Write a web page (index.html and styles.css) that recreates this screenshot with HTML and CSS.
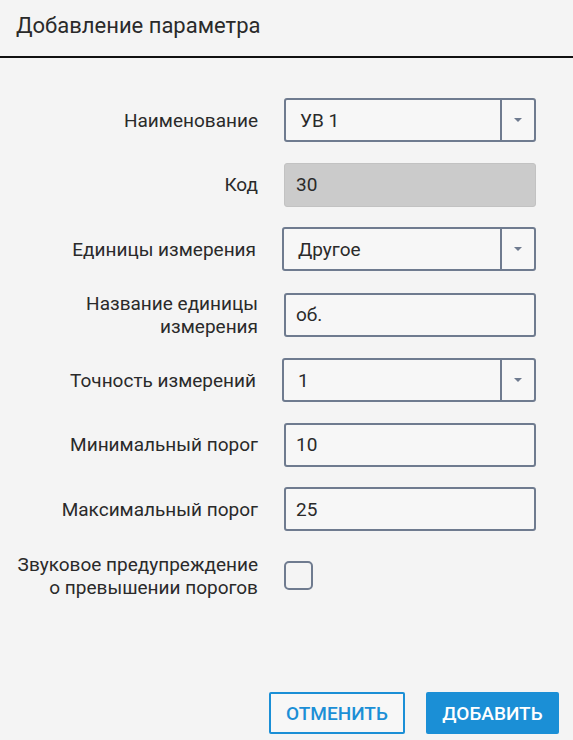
FILE: index.html
```html
<!DOCTYPE html>
<html lang="ru">
<head>
<meta charset="utf-8">
<title>Добавление параметра</title>
<link rel="stylesheet" href="styles.css">
</head>
<body>
<div class="dialog">
  <header class="dialog-header">Добавление параметра</header>
  <main class="form">
    <div class="label">Наименование</div>
    <div class="select">
      <span class="select-value">УВ 1</span>
      <span class="select-arrow"><svg width="10" height="6" viewBox="0 0 10 6"><path d="M1 1h8L5 5z" fill="#6f7b8f"/></svg></span>
    </div>

    <div class="label">Код</div>
    <div class="input input-disabled">30</div>

    <div class="label label-wide">Единицы измерения</div>
    <div class="select select-wide">
      <span class="select-value">Другое</span>
      <span class="select-arrow"><svg width="10" height="6" viewBox="0 0 10 6"><path d="M1 1h8L5 5z" fill="#6f7b8f"/></svg></span>
    </div>

    <div class="label label-multi">Название единицы<br>измерения</div>
    <div class="input">об.</div>

    <div class="label label-wide">Точность измерений</div>
    <div class="select select-wide">
      <span class="select-value">1</span>
      <span class="select-arrow"><svg width="10" height="6" viewBox="0 0 10 6"><path d="M1 1h8L5 5z" fill="#6f7b8f"/></svg></span>
    </div>

    <div class="label">Минимальный порог</div>
    <div class="input">10</div>

    <div class="label">Максимальный порог</div>
    <div class="input">25</div>

    <div class="label label-multi">Звуковое предупреждение<br>о превышении порогов</div>
    <div class="check-cell"><span class="checkbox"></span></div>
  </main>
  <footer class="actions">
    <button class="btn btn-outline">Отменить</button>
    <button class="btn btn-primary">Добавить</button>
  </footer>
</div>
</body>
</html>
```

FILE: styles.css
```css
html, body {
  margin: 0;
  padding: 0;
  background: #f4f4f4;
}
body {
  font-family: Roboto, "Liberation Sans", Arial, sans-serif;
  color: #2a2a2a;
  width: 573px;
  height: 740px;
  overflow: hidden;
}
.dialog {
  display: flex;
  flex-direction: column;
  height: 740px;
}
.dialog-header {
  height: 58px;
  box-sizing: border-box;
  padding: 11px 16px 0;
  font-size: 22px;
  line-height: 30px;
  border-bottom: 2px solid #111;
  color: #2a2a2a;
}
.form {
  display: grid;
  grid-template-columns: 258px 252px;
  column-gap: 26px;
  row-gap: 20.5px;
  padding-top: 40px;
  align-items: center;
}
.label {
  text-align: right;
  font-size: 19px;
  line-height: 23px;
  color: #2a2a2a;
}
.label-wide {
  margin-right: 2px;
}
.select, .input {
  height: 44px;
  box-sizing: border-box;
  border: 2px solid #6f7b8f;
  border-radius: 3px;
  font-size: 19px;
  display: flex;
  align-items: center;
  background: #f7f7f7;
}
.select-wide {
  margin-left: -2px;
}
.select-value {
  flex: 1;
  padding-left: 14px;
}
.select-arrow {
  width: 32px;
  align-self: stretch;
  border-left: 2px solid #6f7b8f;
  display: flex;
  align-items: center;
  justify-content: center;
}
.input {
  padding-left: 10px;
}
.input-disabled {
  background: #cbcbcb;
  border-color: #c2c2c2;
  border-width: 1px;
  padding-left: 11px;
}
.check-cell {
  display: flex;
  align-items: center;
  height: 48px;
}
.checkbox {
  width: 29px;
  height: 29px;
  box-sizing: border-box;
  border: 2px solid #6f7b8f;
  border-radius: 5px;
}
.actions {
  margin-top: auto;
  display: flex;
  justify-content: flex-end;
  gap: 21px;
  padding: 0 14px 6px 0;
}
.btn {
  height: 42px;
  box-sizing: border-box;
  font-family: Roboto, "Liberation Sans", Arial, sans-serif;
  font-size: 19px;
  font-weight: 500;
  text-transform: uppercase;
  border-radius: 2px;
  cursor: pointer;
}
.btn-outline {
  width: 136px;
  background: #f7f7f7;
  color: #1b8fd6;
  border: 2px solid #1b8fd6;
}
.btn-primary {
  width: 133px;
  background: #1b8fd6;
  color: #fff;
  border: none;
}
```
